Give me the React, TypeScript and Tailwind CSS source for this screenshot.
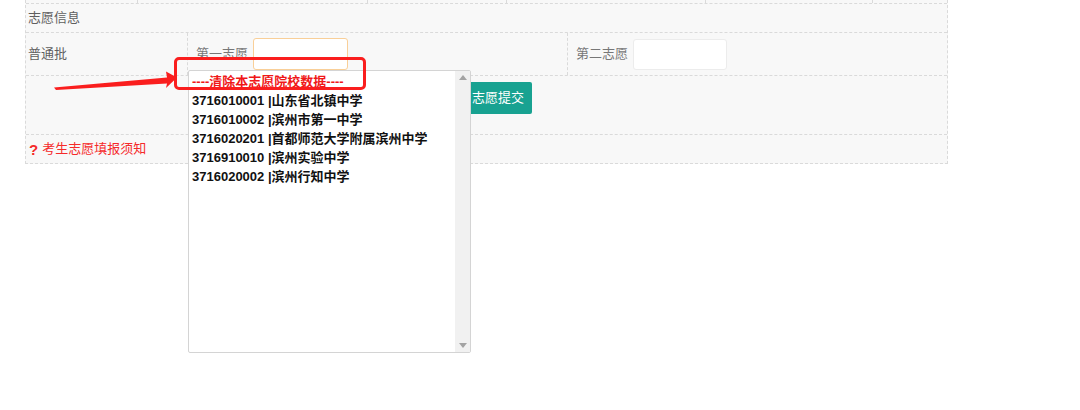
import React from "react";

const items = [
  "3716010001 |山东省北镇中学",
  "3716010002 |滨州市第一中学",
  "3716020201 |首都师范大学附属滨州中学",
  "3716910010 |滨州实验中学",
  "3716020002 |滨州行知中学",
];

export default function App() {
  return (
    <div
      className="relative w-[1080px] h-[410px] bg-white overflow-hidden text-[13px] text-[#666]"
      style={{ fontFamily: '"Liberation Sans", "Noto Sans CJK SC", sans-serif' }}
    >
      <div className="ml-[25px] w-[923px] bg-[#f8f8f8] border-l border-r border-b border-dashed border-[#dadada]">
        {/* partial top row */}
        <div className="flex h-[3px]">
          <div className="w-[112px] border-r border-dashed border-[#dadada]" />
          <div className="w-[230px] border-r border-dashed border-[#dadada]" />
          <div className="w-[139px] border-r border-dashed border-[#dadada]" />
          <div className="w-[199px] border-r border-dashed border-[#dadada]" />
          <div className="w-[167px] border-r border-dashed border-[#dadada]" />
          <div className="flex-1" />
        </div>
        {/* row 1 */}
        <div className="h-[29px] border-t border-dashed border-[#dadada] flex items-center pl-[2px] text-[#5f5f5f]">
          志愿信息
        </div>
        {/* row 2 */}
        <div className="h-[43px] border-t border-dashed border-[#dadada] flex">
          <div className="w-[162px] flex items-center pl-[2px] border-r border-dashed border-[#dadada] text-[#5f5f5f]">
            普通批
          </div>
          <div className="w-[380px] flex items-center pl-[8px] border-r border-dashed border-[#dadada] text-[#777]">
            <span>第一志愿</span>
            <div className="ml-[5px] w-[95px] h-[32px] bg-white border border-[#f9cf98] rounded-[3px]" />
          </div>
          <div className="flex-1 flex items-center pl-[8px] text-[#777]">
            <span>第二志愿</span>
            <div className="ml-[5px] w-[94px] h-[31px] bg-white border border-[#ececec] rounded-[3px]" />
          </div>
        </div>
        {/* row 3 */}
        <div className="h-[59px] border-t border-dashed border-[#dadada] pt-[6px] pl-[438px]">
          <div className="inline-flex items-center h-[32px] px-[8px] bg-[#18a291] text-white text-[13px] rounded-[2px]">
            志愿提交
          </div>
        </div>
        {/* row 4 */}
        <div className="h-[29px] border-t border-dashed border-[#dadada] flex items-center pl-[3px] text-[#f52a2a]">
          <span className="font-bold text-[15px] mr-[4px] leading-none">?</span>
          <span>考生志愿填报须知</span>
        </div>
      </div>

      {/* dropdown list */}
      <div className="absolute left-[188px] top-[70px] w-[283px] h-[283px] bg-white border border-[#d4d4d4] rounded-[2px] flex">
        <div className="flex-1 pl-[3px] pt-[1px] font-bold text-[13px] text-[#111] leading-[19px]">
          <div className="text-[#f01818]">----清除本志愿院校数据----</div>
          {items.map((t) => (
            <div key={t} className="whitespace-nowrap">
              {t}
            </div>
          ))}
        </div>
        <div className="w-[15px] bg-[#f1f1f1] flex flex-col justify-between items-center py-[4px]">
          <svg width="8" height="5" viewBox="0 0 8 5">
            <polygon points="0,5 8,5 4,0" fill="#a3a3a3" />
          </svg>
          <svg width="8" height="5" viewBox="0 0 8 5">
            <polygon points="0,0 8,0 4,5" fill="#a3a3a3" />
          </svg>
        </div>
      </div>

      {/* annotation box */}
      <div className="absolute left-[174px] top-[57px] w-[192px] h-[33px] border-[3px] border-[#fa1e1e] rounded-[5px]" />

      {/* annotation arrow */}
      <svg className="absolute left-0 top-0" width="1080" height="410" viewBox="0 0 1080 410">
        <polygon
          points="54,87.5 167,77.5 166,71.5 177,77.5 166,88 167,83.5 56,90"
          fill="#fa1e1e"
        />
      </svg>
    </div>
  );
}
